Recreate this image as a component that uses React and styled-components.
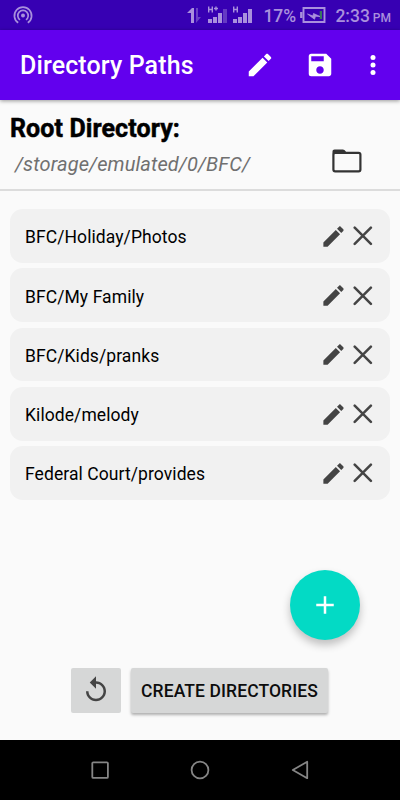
import styled, { createGlobalStyle } from 'styled-components';

const paths = [
  'BFC/Holiday/Photos',
  'BFC/My Family',
  'BFC/Kids/pranks',
  'Kilode/melody',
  'Federal Court/provides',
];

function PencilIcon({ size }) {
  return (
    <svg width={size} height={size} viewBox="0 0 24 24" fill="currentColor">
      <path d="M3 17.25V21h3.75L17.81 9.94l-3.75-3.75L3 17.25zM20.71 7.04c.39-.39.39-1.02 0-1.41l-2.34-2.34c-.39-.39-1.02-.39-1.41 0l-1.83 1.83 3.75 3.75 1.83-1.83z" />
    </svg>
  );
}

function SaveIcon() {
  return (
    <svg width="30" height="30" viewBox="0 0 24 24" fill="currentColor">
      <path d="M17 3H5a2 2 0 0 0-2 2v14a2 2 0 0 0 2 2h14c1.1 0 2-.9 2-2V7l-4-4zm-5 16c-1.66 0-3-1.34-3-3s1.34-3 3-3 3 1.34 3 3-1.34 3-3 3zm3-10H5V5h10v4z" />
    </svg>
  );
}

function MoreIcon() {
  return (
    <svg width="30" height="30" viewBox="0 0 24 24" fill="currentColor">
      <circle cx="12" cy="6" r="2" />
      <circle cx="12" cy="12" r="2" />
      <circle cx="12" cy="18" r="2" />
    </svg>
  );
}

function HotspotIcon() {
  return (
    <svg width="20" height="20" viewBox="0 0 20 20" fill="none" stroke="currentColor" strokeWidth="1.7">
      <circle cx="10" cy="10.5" r="2" fill="currentColor" stroke="none" />
      <path d="M7 14.9a5.2 5.2 0 1 1 6 0" />
      <path d="M5.2 17.8a8.6 8.6 0 1 1 9.6 0" />
    </svg>
  );
}

function SignalIcons() {
  return (
    <svg width="67" height="20" viewBox="0 0 67 20" fill="currentColor">
      <path d="M0 8l5-5h2v15H4V8z" />
      <path d="M9 3h2v9h3l-5 6z" opacity=".45" />
      <path d="M21 14h4v4h-4zM26 12h4v6h-4zM31 8h4v10h-4z" />
      <path d="M36 4h4v14h-4z" opacity=".4" />
      <path d="M46 14h4v4h-4zM51 12h4v6h-4zM56 8h4v10h-4zM61 4h4v14h-4z" />
      <path d="M21.7 1.5v6M25.3 1.5v6M21.7 4.5h3.6M27 3.5h4M29 1.5v4M46.7 1.5v6M50.3 1.5v6M46.7 4.5h3.6" stroke="currentColor" strokeWidth="1.4" fill="none" />
    </svg>
  );
}

function BatteryIcon() {
  return (
    <svg width="26" height="16" viewBox="0 0 26 16" fill="none">
      <path d="M3.5 1h21v14h-21z" stroke="currentColor" strokeWidth="1.9" />
      <path d="M1.3 5v6" stroke="currentColor" strokeWidth="2.4" />
      <path d="M19.7 4H22v8h-2.3z" fill="#38775f" />
      <path d="M7.5 7l5.5 2 .5-2.5L20 9.5l-4.5-.3-1 3z" fill="currentColor" stroke="currentColor" strokeWidth=".8" />
    </svg>
  );
}

function FolderIcon() {
  return (
    <svg width="30" height="24" viewBox="0 0 30 24">
      <path d="M.5 4V2.4C.5 1.1 1.2.4 2.6.4h8.2c1.4 0 2 .8 2.6 1.7L15 4.5H.5z" fill="#333" />
      <rect x="1.4" y="3.8" width="27" height="18.6" rx="1.8" fill="none" stroke="#333" strokeWidth="2.2" />
    </svg>
  );
}

function CloseIcon() {
  return (
    <svg width="20" height="20" viewBox="0 0 20 20" fill="none" stroke="currentColor" strokeWidth="2.5" strokeLinecap="round">
      <path d="M1.7 1.7l16.2 16.2M17.9 1.7L1.7 17.9" />
    </svg>
  );
}

function PlusIcon() {
  return (
    <svg width="30" height="30" viewBox="0 0 24 24" fill="currentColor">
      <path d="M19 13h-6v6h-2v-6H5v-2h6V5h2v6h6v2z" />
    </svg>
  );
}

function ReplayIcon() {
  return (
    <svg width="30" height="30" viewBox="0 0 24 24" fill="currentColor">
      <path d="M12 5V1L7 6l5 5V7c3.31 0 6 2.69 6 6s-2.69 6-6 6-6-2.69-6-6H4c0 4.42 3.58 8 8 8s8-3.58 8-8-3.58-8-8-8z" />
    </svg>
  );
}

export default function App() {
  return (
    <Screen>
      <GlobalStyle />

      <StatusBar>
        <HotspotIcon />
        <StatusInfo>
          <SignalIcons />
          <Battery>17%</Battery>
          <BatteryIcon />
          <Clock>
            <span>2:33</span>
            <small>PM</small>
          </Clock>
        </StatusInfo>
      </StatusBar>

      <Toolbar>
        <Title>Directory Paths</Title>
        <ToolbarButton aria-label="Edit"><PencilIcon size={30} /></ToolbarButton>
        <ToolbarButton aria-label="Save"><SaveIcon /></ToolbarButton>
        <ToolbarButton $width={45} aria-label="More"><MoreIcon /></ToolbarButton>
      </Toolbar>

      <RootSection>
        <div>
          <RootLabel>Root Directory:</RootLabel>
          <RootPath>/storage/emulated/0/BFC/</RootPath>
        </div>
        <FolderButton aria-label="Choose folder"><FolderIcon /></FolderButton>
      </RootSection>

      <PathList>
        {paths.map((path) => (
          <PathRow key={path}>
            <PathName>{path}</PathName>
            <RowButton aria-label="Edit path"><PencilIcon size={27} /></RowButton>
            <RowButton aria-label="Remove path"><CloseIcon /></RowButton>
          </PathRow>
        ))}
      </PathList>

      <AddButton aria-label="Add path"><PlusIcon /></AddButton>

      <Actions>
        <ResetButton aria-label="Reset"><ReplayIcon /></ResetButton>
        <CreateButton>CREATE DIRECTORIES</CreateButton>
      </Actions>

      <NavBar>
        <svg width="20" height="20" viewBox="0 0 20 20"><rect x="2.3" y="2.3" width="15.6" height="15.6" rx="1" /></svg>
        <svg width="20" height="20" viewBox="0 0 20 20"><circle cx="10" cy="10" r="8.4" /></svg>
        <svg width="20" height="20" viewBox="0 0 20 20"><path d="M17.2 1.8v16.4L2.8 10z" /></svg>
      </NavBar>
    </Screen>
  );
}

const GlobalStyle = createGlobalStyle`
  * {
    box-sizing: border-box;
  }

  body {
    margin: 0;
    font-family: Roboto, sans-serif;
  }

  button {
    border: none;
    padding: 0;
    background: none;
    font-family: inherit;
    color: inherit;
  }

  svg {
    display: block;
    flex-shrink: 0;
  }
`;

const Screen = styled.div`
  display: flex;
  flex-direction: column;
  width: 400px;
  height: 800px;
  overflow: hidden;
  background-color: #fafafa;
`;

const StatusBar = styled.header`
  display: flex;
  justify-content: space-between;
  align-items: center;
  height: 30px;
  padding: 0 9px 0 13px;
  background-color: #3700b3;
  color: #a990dd;
`;

const StatusInfo = styled.div`
  display: flex;
  align-items: center;
`;

const Battery = styled.span`
  margin: 2px 5px 0 9px;
  width: 32px;
  font-size: 17.5px;
  font-weight: 500;
  line-height: 20px;
  white-space: nowrap;
`;

const Clock = styled.span`
  display: flex;
  align-items: baseline;
  gap: 3px;
  margin: 2px 0 0 9px;
  font-size: 17.5px;
  font-weight: 500;
  line-height: 20px;

  small {
    font-size: 12px;
    line-height: 14px;
  }
`;

const Toolbar = styled.div`
  display: flex;
  align-items: center;
  height: 70px;
  flex-shrink: 0;
  padding-left: 20px;
  background-color: #6200ee;
  color: #fff;
  box-shadow: 0 1px 4px rgba(0, 0, 0, 0.4);
`;

const Title = styled.h1`
  flex: 1;
  margin: 1px 0 0;
  font-size: 25px;
  font-weight: 500;
  letter-spacing: 0.12px;
`;

const ToolbarButton = styled.button`
  display: flex;
  justify-content: center;
  width: ${({ $width }) => $width || 60}px;

  &:last-child {
    margin-right: 5px;
  }
`;

const RootSection = styled.section`
  display: flex;
  justify-content: space-between;
  height: 91px;
  padding: 13px 38px 0 10px;
  border-bottom: 2px solid #dcdcdc;
`;

const RootLabel = styled.h2`
  margin: 0;
  font-size: 25px;
  font-weight: 700;
  line-height: 32px;
  letter-spacing: 0.1px;
  -webkit-text-stroke: 0.5px #000;
`;

const RootPath = styled.p`
  margin: 6px 0 0 5px;
  font-size: 20px;
  font-style: italic;
  line-height: 26px;
  letter-spacing: 0.11px;
  color: #707070;
`;

const FolderButton = styled.button`
  align-self: flex-start;
  margin-top: 36px;
`;

const PathList = styled.ul`
  display: flex;
  flex-direction: column;
  gap: 5.5px;
  margin: 0;
  padding: 18px 10px 0;
  list-style: none;
`;

const PathRow = styled.li`
  display: flex;
  align-items: center;
  height: 53.75px;
  padding: 0 17px 0 15px;
  border-radius: 12.5px;
  background-color: #f1f1f1;
`;

const PathName = styled.span`
  flex: 1;
  padding-top: 3px;
  font-size: 17.5px;
  letter-spacing: 0.08px;
`;

const RowButton = styled.button`
  margin: 1px 0 0 6px;
  color: #444;
`;

const AddButton = styled.button`
  display: flex;
  justify-content: center;
  align-items: center;
  align-self: flex-end;
  width: 70px;
  height: 70px;
  flex-shrink: 0;
  margin: 70px 40px 0 0;
  border-radius: 50%;
  background-color: #03dac5;
  color: #fff;
  box-shadow: 0 5px 9px rgba(0, 0, 0, 0.24);
`;

const Actions = styled.div`
  display: flex;
  align-items: flex-start;
  gap: 10px;
  padding: 28px 0 0 71px;
`;

const ResetButton = styled.button`
  display: flex;
  justify-content: center;
  align-items: center;
  width: 50px;
  height: 45px;
  border-radius: 2px;
  background-color: #d6d7d7;
  color: #444;
`;

const CreateButton = styled.button`
  width: 197px;
  height: 45px;
  padding-top: 1px;
  border-radius: 2px;
  background-color: #d6d7d7;
  color: #0d0d0d;
  font-size: 17.5px;
  font-weight: 500;
  letter-spacing: 0.1px;
  white-space: nowrap;
  box-shadow: 0 2px 3px rgba(0, 0, 0, 0.3);
`;

const NavBar = styled.nav`
  display: flex;
  justify-content: space-between;
  align-items: center;
  height: 60px;
  margin-top: auto;
  padding: 0 90px;
  background-color: #000;

  svg {
    fill: none;
    stroke: #858585;
    stroke-width: 1.8;
    stroke-linejoin: round;
  }
`;
